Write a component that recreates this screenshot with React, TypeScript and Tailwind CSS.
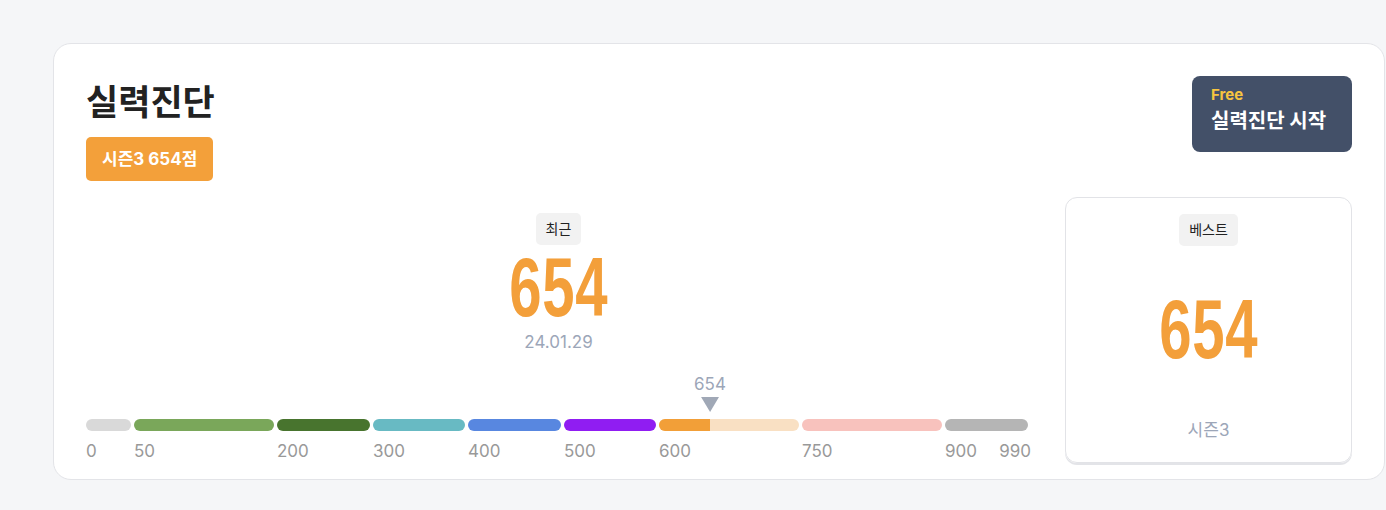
import React from "react";

const segments = [
  { from: "0", width: 45, color: "bg-[#d9d9d9]" },
  { from: "50", width: 140, color: "bg-[#7aa75a]" },
  { from: "200", width: 93, color: "bg-[#48742e]" },
  { from: "300", width: 92, color: "bg-[#68bac3]" },
  { from: "400", width: 93, color: "bg-[#5887e0]" },
  { from: "500", width: 92, color: "bg-[#901df2]" },
  { from: "600", width: 140, color: "bg-[#f9e0c3]", current: true },
  { from: "750", width: 140, color: "bg-[#f8c2bd]" },
  { from: "900", width: 83, color: "bg-[#b5b5b5]", to: "990" },
];

const score = 654;

const Tag = ({ children }: { children: React.ReactNode }) => (
  <span className="rounded-[5px] bg-[#f2f2f2] px-[10px] py-[5px] text-[14px] leading-[22px] text-[#222]">
    {children}
  </span>
);

const BigScore = ({ value }: { value: number }) => (
  <span className="inline-block scale-x-[0.7] font-['Liberation_Sans',sans-serif] text-[83px] font-bold leading-none tracking-[1px] text-[#f39f3a]">
    {value}
  </span>
);

const App: React.FC = () => {
  return (
    <div className="min-h-[510px] bg-[#f5f6f8] pl-[53px] pt-[43px] font-['Inter','Noto_Sans_CJK_KR',sans-serif]">
      <div className="w-[1332px] rounded-[18px] border border-[#e3e4e8] bg-white px-8 pb-4 pt-8">
        {/* Header */}
        <div className="flex items-start justify-between">
          <div>
            <h1 className="text-[35px] font-bold leading-[48px] text-[#222] font-['Noto_Sans_CJK_KR',sans-serif]">
              실력진단
            </h1>
            <span className="mt-[13px] inline-block rounded-[5px] bg-[#f3a03a] px-[16px] py-[10px] text-[17px] font-bold leading-[24px] text-white">
              시즌3 654점
            </span>
          </div>
          <button className="flex h-[76px] w-[160px] flex-col items-start rounded-[8px] bg-[#435068] px-[19px] pt-[9px] text-left">
            <span className="text-[15px] font-bold leading-[20px] text-[#f7c43f]">Free</span>
            <span className="mt-[3px] text-[20px] font-bold leading-[27px] text-white">실력진단 시작</span>
          </button>
        </div>

        {/* Body */}
        <div className="mt-4 flex gap-[34px]">
          <div className="flex flex-1 flex-col items-center pt-4">
            <Tag>최근</Tag>
            <div className="mt-[6px] flex h-[72px] items-center">
              <BigScore value={score} />
            </div>
            <div className="mt-[7px] text-[17px] leading-[24px] text-[#9ca6b8]">24.01.29</div>

            {/* Gauge */}
            <div className="mt-[65px] flex gap-[3px] self-start">
              {segments.map((s) => (
                <div key={s.from} className="flex flex-col" style={{ width: s.width }}>
                  <div className={`relative h-3 rounded-full ${s.color}`}>
                    {s.current && (
                      <>
                        <div className="absolute left-0 top-0 h-3 w-[51px] rounded-l-full bg-[#f29f38]" />
                        <div className="absolute bottom-[19px] left-[51px] flex -translate-x-1/2 flex-col items-center">
                          <span className="text-[17px] leading-[22px] text-[#9ca6b8]">{score}</span>
                          <svg width="18" height="15" viewBox="0 0 18 15" className="mt-[2px]">
                            <path d="M0 0H18L9 15Z" fill="#a0a8b6" />
                          </svg>
                        </div>
                      </>
                    )}
                  </div>
                  <div className="mt-[8px] flex justify-between text-[17px] leading-[24px] text-[#999]">
                    <span>{s.from}</span>
                    {s.to && <span className="-mr-[3px]">{s.to}</span>}
                  </div>
                </div>
              ))}
            </div>
          </div>

          <div className="flex h-[266px] w-[287px] flex-col items-center rounded-xl border border-[#e2e3e7] pt-4 shadow-[0_2px_0_0_#e3e4e8]">
            <Tag>베스트</Tag>
            <div className="mt-[47px] flex h-[72px] items-center">
              <BigScore value={score} />
            </div>
            <div className="mt-auto mb-[20px] text-[17px] leading-[24px] text-[#9ca6b8]">시즌3</div>
          </div>
        </div>
      </div>
    </div>
  );
};

export default App;
